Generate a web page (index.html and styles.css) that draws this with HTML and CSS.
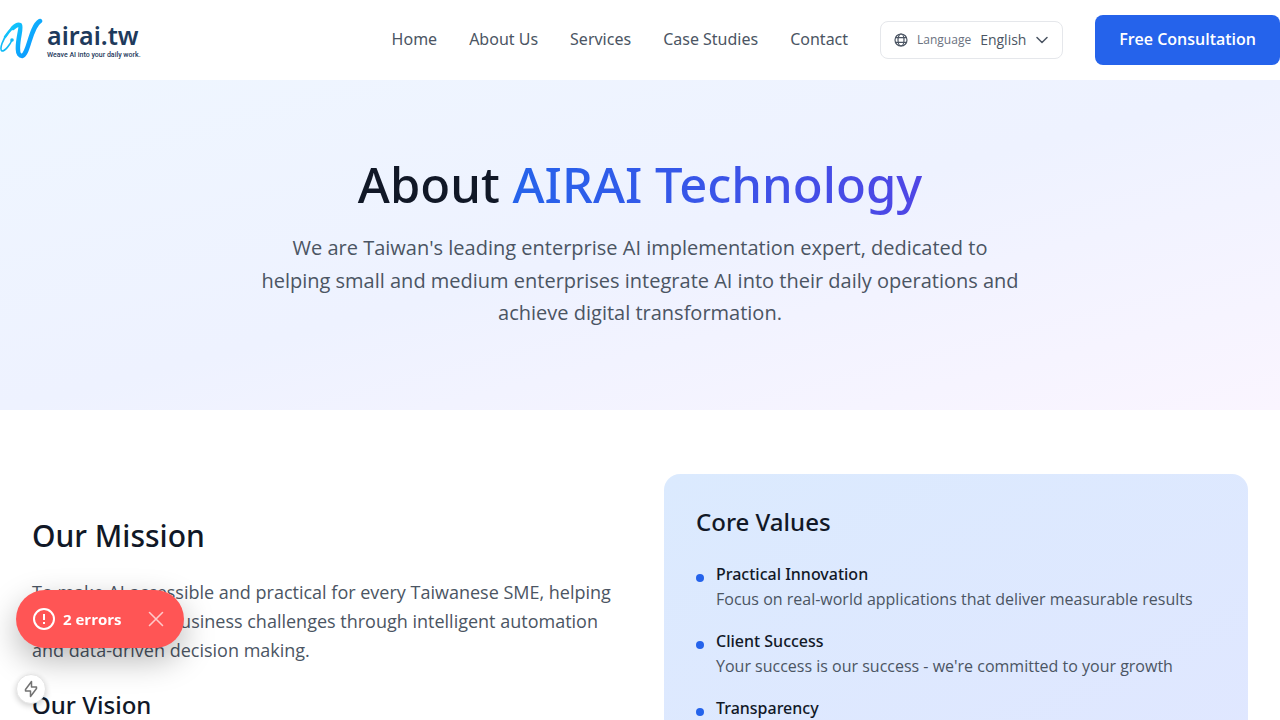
FILE: index.html
```html
<!DOCTYPE html>
<html lang="en">
<head>
<meta charset="utf-8">
<meta name="viewport" content="width=device-width, initial-scale=1">
<title>About AIRAI Technology</title>
<link rel="stylesheet" href="styles.css">
</head>
<body>
<header class="site-header">
  <div class="header-inner">
    <a class="logo" href="#" aria-label="airai.tw home">
      <svg class="logo-mark" viewBox="0 0 44 44" fill="none" stroke-linecap="round" stroke-linejoin="round" aria-hidden="true">
        <defs>
          <linearGradient id="mark" x1="0" y1="0" x2="1" y2="1">
            <stop offset="0" stop-color="#12c8fb"/>
            <stop offset="1" stop-color="#0a8cff"/>
          </linearGradient>
        </defs>
        <path d="M12 22C10 27 5 33 2 33C-1 31 3 21 8 15" stroke="#12baf5" stroke-width="1.600"/>
        <circle cx="12" cy="22" r="1.800" fill="#12baf5"/>
        <path d="M5 19C9 13 13 8 18 7" stroke="#12c0fa" stroke-width="2.500"/>
        <path d="M13 10C15 8 18 6 20 7C22 9 17 23 18 32C18 36 20 38 22 38C29 36 30 9 40 3" stroke="url(#mark)" stroke-width="4.500"/>
      </svg>
      <span class="logo-words">
        <span class="logo-name">airai.tw</span>
        <span class="logo-tagline">Weave AI into your daily work.</span>
      </span>
    </a>
    <nav class="nav" aria-label="Main">
      <a class="nav-link" href="#">Home</a>
      <a class="nav-link" href="#">About Us</a>
      <a class="nav-link" href="#">Services</a>
      <a class="nav-link" href="#">Case Studies</a>
      <a class="nav-link" href="#">Contact</a>
      <div class="language">
        <svg class="globe" viewBox="0 0 14 14" fill="none" stroke="currentColor" stroke-width="1.200" aria-hidden="true">
          <circle cx="7" cy="7" r="6"/>
          <ellipse cx="7" cy="7" rx="3" ry="6"/>
          <path d="M1.600 4.700h10.800M1.600 9.300h10.800"/>
        </svg>
        <label class="language-label" for="language">Language</label>
        <select class="language-select" id="language"><option>English</option></select>
        <svg class="chevron" viewBox="0 0 12 8" fill="none" stroke="currentColor" stroke-width="1.500" stroke-linecap="round" stroke-linejoin="round" aria-hidden="true"><path d="M1 1.500l5 5 5-5"/></svg>
      </div>
      <a class="cta" href="#">Free Consultation</a>
    </nav>
  </div>
</header>
<main>
  <section class="hero">
    <h1 class="hero-title">About <span class="hero-brand">AIRAI Technology</span></h1>
    <p class="hero-text">We are Taiwan's leading enterprise AI implementation expert, dedicated to helping small and medium enterprises integrate AI into their daily operations and achieve digital transformation.</p>
  </section>
  <section class="about">
    <div class="mission">
      <h2 class="mission-title">Our Mission</h2>
      <p class="mission-text">To make AI accessible and practical for every Taiwanese SME, helping them overcome business challenges through intelligent automation and data-driven decision making.</p>
      <h3 class="subtitle">Our Vision</h3>
    </div>
    <div class="values">
      <h3 class="subtitle">Core Values</h3>
      <ul class="value-list">
        <li class="value"><div><h4 class="value-name">Practical Innovation</h4><p class="value-text">Focus on real-world applications that deliver measurable results</p></div></li>
        <li class="value"><div><h4 class="value-name">Client Success</h4><p class="value-text">Your success is our success - we're committed to your growth</p></div></li>
        <li class="value"><div><h4 class="value-name">Transparency</h4></div></li>
      </ul>
    </div>
  </section>
</main>
<div class="dev-tools">
  <div class="error-toast" role="status">
    <svg class="alert-icon" viewBox="0 0 22 22" fill="none" stroke="currentColor" stroke-width="2" aria-hidden="true"><circle cx="11" cy="11" r="10"/><path d="M11 6v6M11 14v2"/></svg>
    <span>2 errors</span>
    <button class="dismiss" type="button" aria-label="Dismiss errors"><svg viewBox="0 0 16 16" fill="none" stroke="currentColor" stroke-width="1.600" stroke-linecap="round" aria-hidden="true"><path d="M1.500 1.500l13 13M14.500 1.500l-13 13"/></svg></button>
  </div>
  <button class="dev-badge" type="button" aria-label="Open developer tools"><svg viewBox="0 0 14 18" fill="none" stroke="currentColor" stroke-width="1.500" stroke-linejoin="round" aria-hidden="true"><path d="M7.500 1.500L1.500 9.500V11H6.500V16.500L12.500 8.500V7H7.500Z"/></svg></button>
</div>
</body>
</html>
```
FILE: styles.css
```css
* { box-sizing: border-box; }

body {
  margin: 0;
  background: #fff;
  color: #111827;
  font-family: "Open Sans", "Noto Sans", sans-serif;
  font-size: 16px;
  line-height: 1.6;
}

h1, h2, h3, h4, p, ul { margin: 0; padding: 0; }
h1, h2, h3, h4 { font-family: "Noto Sans", sans-serif; font-weight: 500; }
h4 { font-size: 16px; }
a { color: inherit; text-decoration: none; }
button { border: 0; padding: 0; font: inherit; cursor: pointer; }
svg { display: block; }

.site-header { background: #fff; }
.header-inner {
  max-width: 1280px;
  min-height: 80px;
  margin: 0 auto;
  display: flex;
  align-items: center;
  justify-content: space-between;
}

.logo { display: flex; align-items: center; gap: 3px; }
.logo-mark { width: 44px; height: 44px; }
.logo-words { display: flex; flex-direction: column; color: #1e3a5c; white-space: nowrap; }
.logo-name { font-family: "Noto Sans", sans-serif; font-size: 25px; font-weight: 600; line-height: 30px; }
.logo-tagline { font-family: Roboto, sans-serif; font-size: 7px; font-weight: 500; line-height: 10px; }

.nav { display: flex; align-items: center; gap: 32px; color: #4b5563; white-space: nowrap; }
.nav-link { font-family: "Noto Sans", sans-serif; }

.language {
  display: flex;
  align-items: center;
  gap: 9px;
  height: 38px;
  padding: 0 14px 0 13px;
  border: 1px solid #e5e7eb;
  border-radius: 8px;
}
.globe { width: 14px; height: 14px; }
.language-label { color: #6b7280; font-size: 12px; }
.language-select {
  appearance: none;
  padding: 0;
  border: 0;
  background: transparent;
  color: #4b5563;
  font: inherit;
  font-size: 14px;
}
.chevron { width: 12px; height: 8px; }

.cta {
  padding: 12px 24px;
  border-radius: 8px;
  background: #2563eb;
  color: #fff;
  font-weight: 600;
}

.hero {
  padding: 80px 32px;
  background: linear-gradient(to bottom right, #eff6ff, #eef2ff 50%, #faf5ff);
  text-align: center;
}
.hero-title { margin-bottom: 24px; font-size: 49px; line-height: 48px; }
.hero-brand {
  display: inline-block;
  margin: -12px 0;
  padding: 12px 0;
  background: linear-gradient(to right, #2563eb, #4f46e5);
  background-clip: text;
  color: transparent;
}
.hero-text { max-width: 768px; margin: 0 auto; color: #4b5563; font-size: 20px; line-height: 1.625; }

.about {
  max-width: 1280px;
  margin: 0 auto;
  padding: 64px 32px;
  display: grid;
  grid-template-columns: 1fr 1fr;
  gap: 48px;
}
.mission { padding-top: 44px; }
.mission-title { margin-bottom: 24px; font-size: 30px; line-height: 36px; }
.mission-text { margin-bottom: 24px; color: #4b5563; font-size: 18px; line-height: 29px; }
.subtitle { font-size: 24px; line-height: 32px; }

.values {
  padding: 32px;
  border-radius: 16px;
  background: linear-gradient(to bottom right, #dbeafe, #e0e7ff);
}
.value-list { margin-top: 24px; display: grid; gap: 16px; list-style: none; }
.value { display: flex; gap: 12px; }
.value::before {
  content: "";
  flex: none;
  width: 8px;
  height: 8px;
  margin-top: 12px;
  border-radius: 50%;
  background: #2563eb;
}
.value-text { color: #4b5563; }

.dev-tools {
  position: fixed;
  left: 16px;
  bottom: 16px;
  display: flex;
  flex-direction: column;
  align-items: flex-start;
  gap: 26px;
}
.error-toast {
  display: flex;
  align-items: center;
  gap: 8px;
  height: 58px;
  padding: 0 20px 0 17px;
  border-radius: 29px;
  background: #ff5555;
  box-shadow: 0 12px 32px rgba(0, 0, 0, 0.28);
  color: #fff;
  font-size: 15px;
  font-weight: 700;
}
.alert-icon { width: 22px; height: 22px; }
.dismiss { width: 16px; height: 16px; margin-left: 18px; background: none; color: #ffc9c9; }
.dev-badge {
  display: grid;
  place-items: center;
  width: 30px;
  height: 30px;
  border: 1px solid #e5e5e5;
  border-radius: 50%;
  background: #fff;
  box-shadow: 0 2px 6px rgba(0, 0, 0, 0.2);
  color: #737373;
}
.dev-badge svg { width: 14px; height: 18px; }
```
